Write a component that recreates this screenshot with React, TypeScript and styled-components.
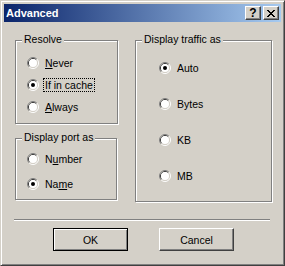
import React from "react";
import styled, { createGlobalStyle } from "styled-components";

const Global = createGlobalStyle`
  html, body { margin: 0; padding: 0; background: #d4d0c8; }
  body { font-family: "Liberation Sans", Arial, sans-serif; font-size: 10.5px; color: #000; }
  * { box-sizing: border-box; }
`;

const Window = styled.div`
  width: 285px;
  height: 266px;
  background: #d4d0c8;
  border: 1px solid;
  border-color: #d4d0c8 #404040 #404040 #d4d0c8;
  box-shadow: inset 1px 1px #fff, inset -1px -1px #808080;
  padding: 3px;
  display: flex;
  flex-direction: column;
`;

const TitleBar = styled.div`
  height: 18px;
  flex: none;
  display: flex;
  align-items: center;
  padding: 0 2px;
  gap: 2px;
  background: linear-gradient(to right, #0a246a, #a6caf0);
`;

const Title = styled.span`
  flex: 1;
  color: #fff;
  font-weight: bold;
  font-size: 11px;
  line-height: 14px;
`;

const CaptionButton = styled.div`
  width: 16px;
  height: 14px;
  background: #d4d0c8;
  border: 1px solid;
  border-color: #fff #404040 #404040 #fff;
  box-shadow: inset -1px -1px #808080;
  display: flex;
  align-items: center;
  justify-content: center;
  font-weight: bold;
  font-size: 12px;
  line-height: 12px;
  color: #000;
`;

const Client = styled.div`
  flex: 1;
  display: flex;
  flex-direction: column;
  padding: 18px 0 0 11px;
`;

const Columns = styled.div`
  display: flex;
  align-items: flex-start;
  gap: 17px;
`;

const Column = styled.div`
  display: flex;
  flex-direction: column;
  gap: 14px;
`;

const Group = styled.div<{ $w: number; $h: number; $pl: number; $pt: number; $gap: number }>`
  position: relative;
  width: ${(p) => p.$w}px;
  height: ${(p) => p.$h}px;
  border: 1px solid #808080;
  box-shadow: inset 1px 1px #fff, 1px 1px #fff;
  display: flex;
  flex-direction: column;
  padding: ${(p) => p.$pt}px 0 0 ${(p) => p.$pl}px;
  gap: ${(p) => p.$gap}px;
`;

const Legend = styled.span`
  position: absolute;
  top: -9px;
  left: 6px;
  padding: 0 2px;
  background: #d4d0c8;
  line-height: 14px;
  white-space: nowrap;
`;

const RadioRow = styled.div`
  height: 14px;
  display: flex;
  align-items: center;
  gap: 4px;
`;

const RadioLabel = styled.span<{ $focus?: boolean }>`
  border: 1px dotted ${(p) => (p.$focus ? "#000" : "transparent")};
  padding: 0 1px;
  line-height: 12px;
  white-space: nowrap;
`;

const Separator = styled.div`
  margin: 17px 0 0 -1px;
  width: 256px;
  height: 2px;
  border-top: 1px solid #808080;
  border-bottom: 1px solid #fff;
`;

const ButtonRow = styled.div`
  display: flex;
  gap: 31px;
  margin: 7px 0 0 38px;
`;

const Button = styled.div<{ $default?: boolean }>`
  width: 75px;
  height: 23px;
  display: flex;
  align-items: center;
  justify-content: center;
  background: #d4d0c8;
  border: 1px solid;
  border-color: ${(p) => (p.$default ? "#000" : "#fff #404040 #404040 #fff")};
  box-shadow: ${(p) =>
    p.$default ? "inset 1px 1px #fff, inset -1px -1px #808080" : "inset -1px -1px #808080"};
  line-height: 14px;
`;

const RadioIcon = ({ checked }: { checked?: boolean }) => (
  <svg width="12" height="12" viewBox="0 0 12 12" style={{ flex: "none" }}>
    <path d="M2.11 9.89 A5.5 5.5 0 0 1 9.89 2.11" stroke="#808080" fill="none" />
    <path d="M9.89 2.11 A5.5 5.5 0 0 1 2.11 9.89" stroke="#fff" fill="none" />
    <path d="M2.82 9.18 A4.5 4.5 0 0 1 9.18 2.82" stroke="#404040" fill="none" />
    <path d="M9.18 2.82 A4.5 4.5 0 0 1 2.82 9.18" stroke="#d4d0c8" fill="none" />
    <circle cx="6" cy="6" r="4" fill="#fff" />
    {checked && <circle cx="6" cy="6" r="2" fill="#000" />}
  </svg>
);

const CloseGlyph = () => (
  <svg width="8" height="7" viewBox="0 0 8 7" shapeRendering="crispEdges">
    <path
      fill="#000"
      d="M0 0h2v1H0z M6 0h2v1H6z M1 1h2v1H1z M5 1h2v1H5z M2 2h4v1H2z M3 3h2v1H3z M2 4h4v1H2z M1 5h2v1H1z M5 5h2v1H5z M0 6h2v1H0z M6 6h2v1H6z"
    />
  </svg>
);

const Radio = ({
  checked,
  focus,
  children,
}: {
  checked?: boolean;
  focus?: boolean;
  children: React.ReactNode;
}) => (
  <RadioRow>
    <RadioIcon checked={checked} />
    <RadioLabel $focus={focus}>{children}</RadioLabel>
  </RadioRow>
);

export default function App() {
  return (
    <>
      <Global />
      <Window>
        <TitleBar>
          <Title>Advanced</Title>
          <CaptionButton>?</CaptionButton>
          <CaptionButton>
            <CloseGlyph />
          </CaptionButton>
        </TitleBar>
        <Client>
          <Columns>
            <Column>
              <Group $w={103} $h={84} $pl={11} $pt={15} $gap={8}>
                <Legend>Resolve</Legend>
                <Radio>
                  <u>N</u>ever
                </Radio>
                <Radio checked focus>
                  If in cache
                </Radio>
                <Radio>
                  <u>A</u>lways
                </Radio>
              </Group>
              <Group $w={102} $h={62} $pl={11} $pt={13} $gap={11}>
                <Legend>Display port as</Legend>
                <Radio>
                  N<u>u</u>mber
                </Radio>
                <Radio checked>
                  Na<u>m</u>e
                </Radio>
              </Group>
            </Column>
            <Group $w={137} $h={162} $pl={23} $pt={20} $gap={22}>
              <Legend>Display traffic as</Legend>
              <Radio checked>Auto</Radio>
              <Radio>Bytes</Radio>
              <Radio>KB</Radio>
              <Radio>MB</Radio>
            </Group>
          </Columns>
          <Separator />
          <ButtonRow>
            <Button $default>OK</Button>
            <Button>Cancel</Button>
          </ButtonRow>
        </Client>
      </Window>
    </>
  );
}
